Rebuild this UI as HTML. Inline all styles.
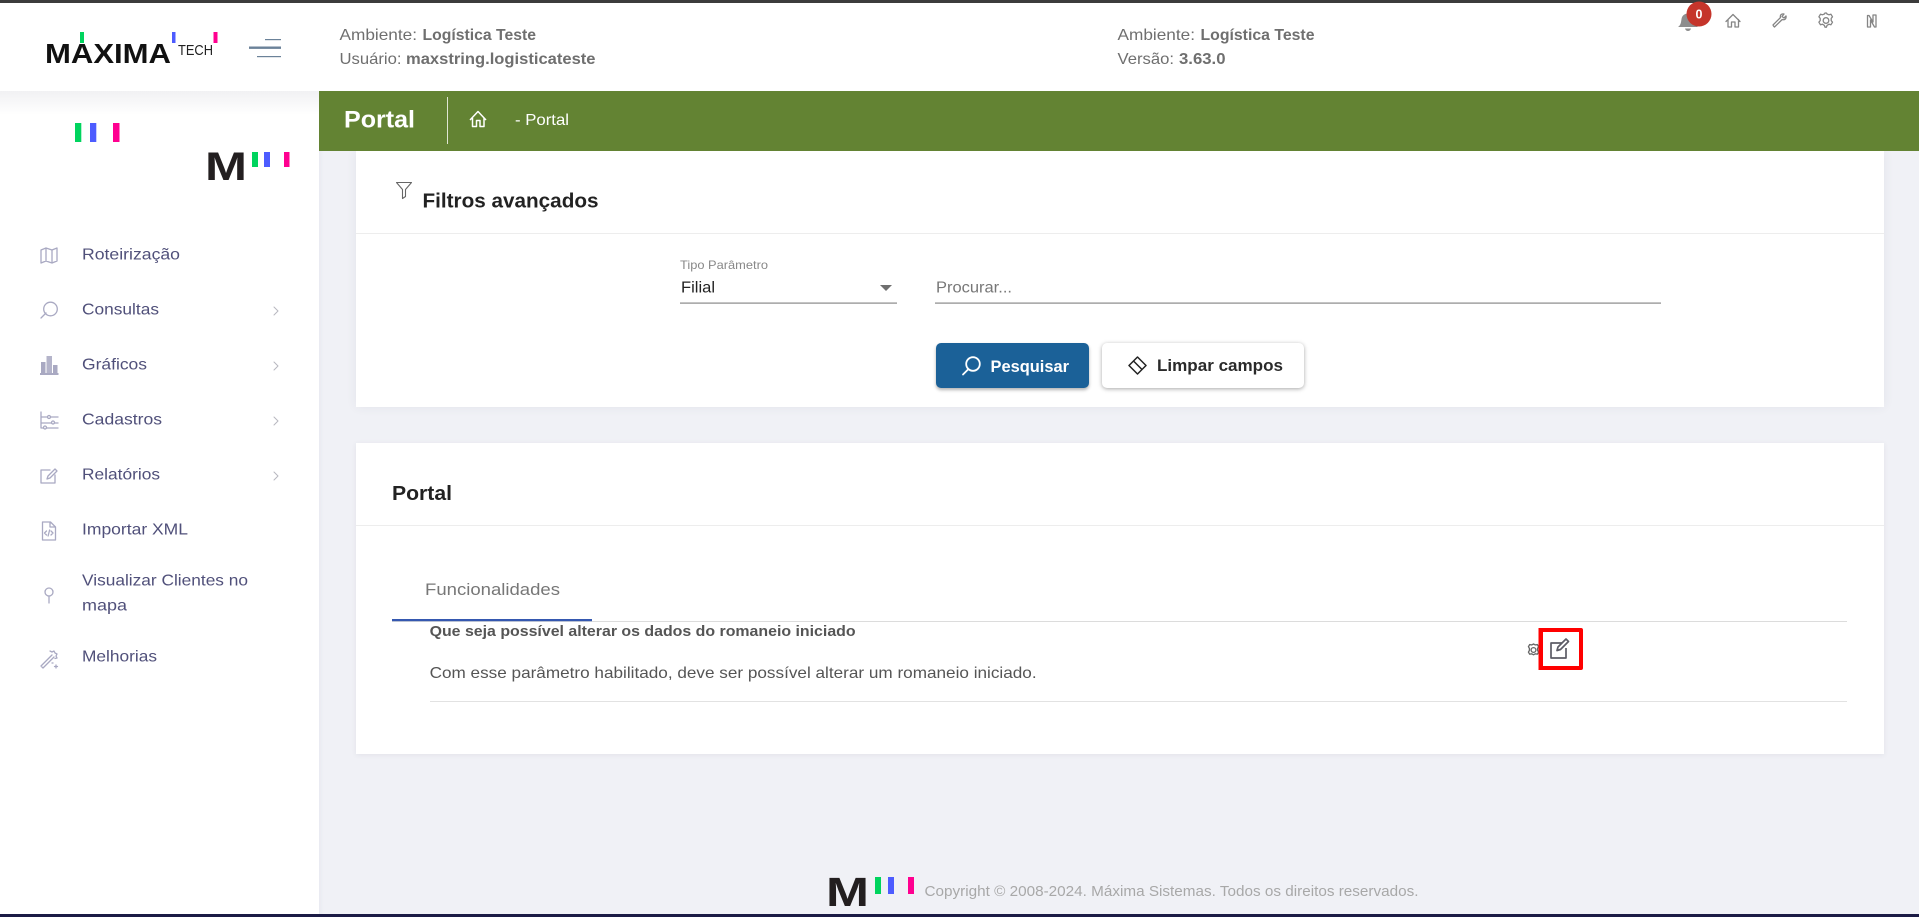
<!DOCTYPE html>
<html lang="pt-BR"><head><meta charset="utf-8"><title>Portal</title>
<style>
html,body{margin:0;padding:0;width:1919px;height:917px;overflow:hidden;background:#f0f1f6;font-family:"Liberation Sans",sans-serif}
.a{position:absolute}
svg.page{position:absolute;left:0;top:0}
svg text{font-family:"Liberation Sans",sans-serif}
</style></head><body>
<div class="a" style="left:0;top:91px;width:319px;height:826px;background:#fff;box-shadow:1px 0 5px rgba(60,60,90,.05)"></div>
<div class="a" style="left:0;top:91px;width:319px;height:24px;background:linear-gradient(#f1f1f3,#fff)"></div>
<div class="a" style="left:0;top:0;width:1919px;height:91px;background:#fff"></div>
<div class="a" style="left:356px;top:151px;width:1528px;height:256px;background:#fff;box-shadow:0 0 10px rgba(60,60,90,.07)"></div>
<div class="a" style="left:319px;top:91px;width:1600px;height:60px;background:#638333"></div>
<div class="a" style="left:356px;top:443px;width:1528px;height:311px;background:#fff;box-shadow:0 1px 5px rgba(60,60,90,.08)"></div>
<div class="a" style="left:936px;top:343px;width:153px;height:45px;background:#1b6198;border-radius:5px;box-shadow:0 2px 3px rgba(0,0,0,.3)"></div>
<div class="a" style="left:1102px;top:343px;width:202px;height:45px;background:#fff;border-radius:5px;box-shadow:0 1px 4px rgba(0,0,0,.35)"></div>
<div class="a" style="left:1538.500px;top:628px;width:36.500px;height:34px;border:4px solid #f00;border-radius:2px"></div>

<svg class="page" width="1919" height="917" viewBox="0 0 1919 917" xmlns="http://www.w3.org/2000/svg">
<rect x="0" y="0" width="1919" height="3" fill="#3c3c3c"/>
<rect x="0" y="914" width="1919" height="3" fill="#1b1b45"/>

<!-- header logo -->
<text x="45" y="63" font-size="28" font-weight="700" fill="#111" textLength="126" lengthAdjust="spacingAndGlyphs">MAXIMA</text>
<text x="178" y="55" font-size="14.500" fill="#222" textLength="35" lengthAdjust="spacingAndGlyphs">TECH</text>
<rect x="80" y="32" width="4" height="11" fill="#00d45e"/><rect x="172" y="32" width="3.500" height="11" fill="#4d5cff"/><rect x="213.500" y="32" width="4" height="11" fill="#ff0090"/>
<!-- hamburger -->
<rect x="265" y="39" width="16" height="1.200" fill="#6b8299"/><rect x="249" y="46.500" width="32" height="2.400" fill="#6b8299"/><rect x="257" y="56" width="24" height="1.200" fill="#6b8299"/>

<!-- header text -->
<g font-size="16" fill="#6f6f6f">
<text x="339.500" y="40" textLength="77.500" lengthAdjust="spacingAndGlyphs">Ambiente:</text>
<text x="422.500" y="40" font-weight="700" textLength="113.500" lengthAdjust="spacingAndGlyphs">Logística Teste</text>
<text x="339.500" y="64" textLength="62" lengthAdjust="spacingAndGlyphs">Usuário:</text>
<text x="406" y="64" font-weight="700" textLength="189.500" lengthAdjust="spacingAndGlyphs">maxstring.logisticateste</text>
<text x="1117.500" y="40" textLength="77.500" lengthAdjust="spacingAndGlyphs">Ambiente:</text>
<text x="1200.500" y="40" font-weight="700" textLength="114" lengthAdjust="spacingAndGlyphs">Logística Teste</text>
<text x="1117.500" y="64" textLength="56.500" lengthAdjust="spacingAndGlyphs">Versão:</text>
<text x="1179" y="64" font-weight="700" textLength="46.500" lengthAdjust="spacingAndGlyphs">3.63.0</text>
</g>

<!-- top right icons -->
<path d="M1678 27c3-2 3-5 3.500-8 .6-3.500 3-5.500 6.500-5.500s6 2 6.500 5.500c.5 3 .5 6 3.500 8z" fill="#8d8d8d"/><path d="M1685 28.500h6c-.5 1.800-1.500 2.500-3 2.500s-2.500-.7-3-2.500z" fill="#8d8d8d"/>
<circle cx="1699" cy="14" r="12.500" fill="#c5352b"/>
<text x="1699" y="18.500" font-size="12.500" font-weight="700" fill="#fff" text-anchor="middle">0</text>
<g fill="none" stroke="#858585" stroke-width="1.300" stroke-linejoin="round" stroke-linecap="round">
<path d="M1726 21.500l7-7 7 7M1728 19.500v7.500h3.500v-5h3.500v5h3.500v-7.500"/>
<path d="M1773.500 26l-.5-1 7.500-7.500c-.7-2.500 1-4 3.500-3.500l-2 2.500 2 1.500 2-2c.5 2.800-1.300 4.300-3.800 3.500l-7.700 7.500z"/>
<path d="M1826 14.500l2 .8 1.900-.6 1.600 2.600-1.300 1.600v2.200l1.300 1.600-1.600 2.600-1.900-.6-2 1.200-.6 1.800h-1.400l-.6-1.800-2-1.200-1.900.6-1.600-2.600 1.300-1.600v-2.200l-1.300-1.600 1.600-2.600 1.900.6 2-.8.6-1h1.400z" transform="translate(1 -.5)"/><circle cx="1826" cy="20.500" r="2.800"/>
<path d="M1867.500 15.500v11.500h3v-7l4 7h1.500v-12h-3v7l-4-6.500z"/>
</g>

<!-- page heading band -->
<text x="344" y="127.500" font-size="24" font-weight="700" fill="#fff" textLength="71" lengthAdjust="spacingAndGlyphs">Portal</text>
<rect x="447" y="97" width="1" height="47" fill="#dfe6d3"/>
<path d="M470 120l8-8.500 8 8.500M472.500 118v8.500h4v-6h3.500v6h4v-8.500" fill="none" stroke="#fff" stroke-width="1.500" stroke-linejoin="round"/>
<text x="515" y="125" font-size="16" fill="#fff" textLength="54" lengthAdjust="spacingAndGlyphs">- Portal</text>

<!-- sidebar logo -->
<rect x="75" y="123" width="6.300" height="19" fill="#00d45e"/><rect x="90" y="123" width="6.300" height="19" fill="#4d5cff"/><rect x="113" y="123" width="6.500" height="19" fill="#ff0090"/>
<text x="205" y="180" font-size="40" font-weight="700" fill="#231f20" textLength="42" lengthAdjust="spacingAndGlyphs">M</text>
<rect x="252" y="152" width="6" height="15" fill="#00d45e"/><rect x="264" y="152" width="6" height="15" fill="#4d5cff"/><rect x="284" y="152" width="5.500" height="15" fill="#ff0090"/>

<!-- sidebar text -->
<g font-size="16" fill="#50507a">
<text x="82" y="259.500" textLength="98" lengthAdjust="spacingAndGlyphs">Roteirização</text>
<text x="82" y="314.500" textLength="77" lengthAdjust="spacingAndGlyphs">Consultas</text>
<text x="82" y="369.500" textLength="65" lengthAdjust="spacingAndGlyphs">Gráficos</text>
<text x="82" y="424.500" textLength="80" lengthAdjust="spacingAndGlyphs">Cadastros</text>
<text x="82" y="479.500" textLength="78" lengthAdjust="spacingAndGlyphs">Relatórios</text>
<text x="82" y="534.500" textLength="106" lengthAdjust="spacingAndGlyphs">Importar XML</text>
<text x="82" y="585.500" textLength="166" lengthAdjust="spacingAndGlyphs">Visualizar Clientes no</text>
<text x="82" y="610.500" textLength="45" lengthAdjust="spacingAndGlyphs">mapa</text>
<text x="82" y="661.500" textLength="75" lengthAdjust="spacingAndGlyphs">Melhorias</text>
</g>

<!-- sidebar icons -->
<g fill="none" stroke="#a9a9c2" stroke-width="1.300" stroke-linejoin="round" stroke-linecap="round">
<path d="M41 250l5-2 6 2 5-2v13l-5 2-6-2-5 2zM46 248v13M52 250v13"/>
<path d="M41 318l5-5"/><circle cx="50.500" cy="309" r="6.800"/>
<path d="M274 307l4 4-4 4M274 362l4 4-4 4M274 417l4 4-4 4M274 472l4 4-4 4" stroke="#b8b8c0" stroke-width="1"/>
<path d="M41 412v16M41 417h17M41 423h17M41 428h17"/><circle cx="49" cy="417" r="1.500" fill="#fff"/><circle cx="53" cy="422.500" r="1.500" fill="#fff"/><circle cx="45" cy="427.500" r="1.500" fill="#fff"/>
<path d="M55 475v8h-14v-13h9"/><path d="M47 479l1-3 7-7 2 2-7 7z"/>
<path d="M42.500 522h8l5 5v13h-13zM50 522v5h5M46.500 531l-2 2 2 2M51 531l2 2-2 2M49.600 530l-1.500 6"/>
<circle cx="49" cy="592" r="4"/><path d="M49 596v7"/>
<path d="M41 666l11-11M43 668l11-11M41 666l2 2M50 651l2 1 2-1 1 2 2 1-1 2 1 2-2 .5M52 663h1M56 665v3M54.500 666.500h3"/>
</g>
<rect x="40" y="373" width="18.500" height="2" fill="#a9a9c2"/><rect x="41" y="362" width="4.500" height="11" fill="#a9a9c2"/><rect x="46.500" y="356" width="5.500" height="17" fill="#b4b4ca"/><rect x="53" y="365" width="4.500" height="8" fill="#a9a9c2"/>

<!-- filters card -->
<path d="M396.500 182.500h15l-6 7v7l-3 2v-9z" fill="none" stroke="#666" stroke-width="1.100" stroke-linejoin="round"/>
<text x="422.500" y="207.500" font-size="20" font-weight="700" fill="#222" textLength="176" lengthAdjust="spacingAndGlyphs">Filtros avançados</text>
<rect x="356" y="233" width="1528" height="1" fill="#ededed"/>
<text x="680" y="269" font-size="12" fill="#888" textLength="88" lengthAdjust="spacingAndGlyphs">Tipo Parâmetro</text>
<text x="681" y="292.500" font-size="16" fill="#222" textLength="34" lengthAdjust="spacingAndGlyphs">Filial</text>
<path d="M880 285h12l-6 6z" fill="#6f6f6f"/>
<rect x="680" y="302.500" width="217" height="1.200" fill="#8a8a8a"/>
<text x="936" y="292.500" font-size="16" fill="#777" textLength="76" lengthAdjust="spacingAndGlyphs">Procurar...</text>
<rect x="935" y="302.500" width="726" height="1.200" fill="#8a8a8a"/>

<!-- buttons -->
<g fill="none" stroke="#fff" stroke-width="1.800" stroke-linecap="round"><circle cx="973" cy="364" r="6.800"/><path d="M968 369.500l-5 5"/></g>
<text x="990.500" y="372" font-size="17" font-weight="700" fill="#fff" textLength="78.500" lengthAdjust="spacingAndGlyphs">Pesquisar</text>
<g fill="none" stroke="#222" stroke-width="1.500" stroke-linejoin="round"><path d="M1129 365.500l8.500-8.500 8.500 8.500-8.500 8.500zM1133.500 361l8.500 8.500"/></g>
<text x="1157" y="371" font-size="17" font-weight="700" fill="#2a2a2a" textLength="126" lengthAdjust="spacingAndGlyphs">Limpar campos</text>

<!-- portal card -->
<text x="392" y="500" font-size="20" font-weight="700" fill="#222" textLength="60" lengthAdjust="spacingAndGlyphs">Portal</text>
<rect x="356" y="525" width="1528" height="1" fill="#ededed"/>
<text x="425" y="595" font-size="17" fill="#777" textLength="135" lengthAdjust="spacingAndGlyphs">Funcionalidades</text>
<rect x="392" y="621" width="1455" height="1" fill="#dcdcdc"/>
<rect x="392" y="619" width="200" height="2.200" fill="#3558b0"/>
<text x="429.600" y="636" font-size="15" font-weight="700" fill="#555" textLength="426" lengthAdjust="spacingAndGlyphs">Que seja possível alterar os dados do romaneio iniciado</text>
<text x="429.600" y="678" font-size="16" fill="#555" textLength="607" lengthAdjust="spacingAndGlyphs">Com esse parâmetro habilitado, deve ser possível alterar um romaneio iniciado.</text>
<rect x="430" y="701" width="1417" height="1" fill="#e2e2e2"/>
<!-- gear & edit -->
<g fill="none" stroke="#666" stroke-width="1.100" transform="translate(1533.500 650) scale(1.200) translate(-1534 -650)"><circle cx="1534" cy="650" r="2"/><path d="M1534 645l1.500.8 1.700-.3 1 1.700-.8 1.500v1.600l.8 1.500-1 1.700-1.700-.3-1.500.8-1.500-.8-1.700.3-1-1.700.8-1.500v-1.600l-.8-1.500 1-1.700 1.700.3z"/></g>
<rect x="1538.500" y="628" width="4" height="42" fill="#f00"/>
<g fill="none" stroke="#5c5c66" stroke-width="1.700" stroke-linejoin="round" transform="translate(1 0)"><path d="M1561 643h-11v15h15v-10"/><path d="M1556 650.500l1-3.500 8-8 2.500 2.500-8 8z"/></g>

<!-- footer -->
<text x="826" y="906" font-size="41" font-weight="700" fill="#231f20" textLength="43" lengthAdjust="spacingAndGlyphs">M</text>
<rect x="875" y="877" width="6" height="17" fill="#00d45e"/><rect x="888" y="877" width="6" height="17" fill="#4d5cff"/><rect x="908" y="877" width="6" height="17" fill="#ff0090"/>
<text x="924.500" y="896" font-size="15" fill="#a8a8a8" textLength="494" lengthAdjust="spacingAndGlyphs">Copyright © 2008-2024. Máxima Sistemas. Todos os direitos reservados.</text>
</svg>
</body></html>
